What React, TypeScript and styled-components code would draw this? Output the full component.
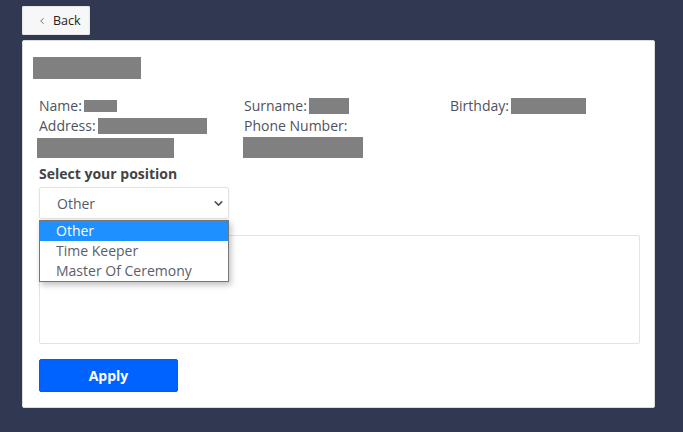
import React from "react";
import styled, { createGlobalStyle } from "styled-components";
import { ChevronDown, ChevronLeft } from "lucide-react";

const GlobalStyle = createGlobalStyle`
  html, body {
    margin: 0;
    padding: 0;
    background: #313852;
    font-family: "Open Sans", "Noto Sans", sans-serif;
  }
  * { box-sizing: border-box; }
`;

const Page = styled.div`
  padding: 6px 28px 24px 22px;
  display: flex;
  flex-direction: column;
  align-items: flex-start;
  gap: 5px;
`;

const BackButton = styled.button`
  width: 68px;
  height: 29px;
  display: flex;
  align-items: center;
  gap: 6px;
  padding: 0 0 0 14px;
  background: #f7f7f7;
  border: 1px solid #e6e6e6;
  border-radius: 1px;
  font-family: "Open Sans", sans-serif;
  font-size: 12.5px;
  color: #222;
  cursor: pointer;
`;

const Card = styled.div`
  width: 633px;
  height: 368px;
  background: #fff;
  border: 1px solid #dcdcdc;
  border-radius: 2px;
  padding: 16px 14px 15px 16px;
  display: flex;
  flex-direction: column;
  & > * {
    flex-shrink: 0;
  }
`;

const Redacted = styled.span<{ w: number; h: number }>`
  display: inline-block;
  width: ${(p) => p.w}px;
  height: ${(p) => p.h}px;
  background: #808080;
  vertical-align: middle;
`;

const TitleBlock = styled(Redacted)`
  margin-left: -6px;
  display: block;
`;

const InfoGrid = styled.div`
  display: grid;
  grid-template-columns: 205px 206px 1fr;
  margin-top: 18px;
`;

const InfoColumn = styled.div`
  display: flex;
  flex-direction: column;
`;

const InfoLine = styled.div`
  font-size: 14px;
  line-height: 18px;
  color: #4e5260;
  display: flex;
  align-items: center;
  gap: 2px;
  white-space: nowrap;
`;

const WrapBlock = styled.div<{ indent: number }>`
  margin-left: ${(p) => p.indent}px;
`;

const Label = styled.div`
  margin-top: 7px;
  font-size: 14px;
  line-height: 18px;
  font-weight: 700;
  color: #444;
`;

const SelectArea = styled.div`
  position: relative;
  margin-top: 4px;
  width: 190px;
`;

const SelectBox = styled.div`
  height: 32px;
  border: 1px solid #e3e3e3;
  border-radius: 2px;
  box-shadow: 0 1px 3px rgba(0, 0, 0, 0.06);
  display: flex;
  align-items: center;
  justify-content: space-between;
  padding: 0 3px 0 17px;
  font-size: 14px;
  color: #555a66;
`;

const Dropdown = styled.ul`
  position: absolute;
  top: 33px;
  left: 0;
  width: 190px;
  margin: 0;
  padding: 0;
  list-style: none;
  background: #fff;
  border: 1px solid #767676;
  box-shadow: 2px 3px 6px rgba(0, 0, 0, 0.25);
  z-index: 2;
`;

const Option = styled.li<{ active?: boolean }>`
  height: 20px;
  line-height: 20px;
  padding-left: 16px;
  font-size: 14px;
  color: ${(p) => (p.active ? "#fff" : "#5a5e6b")};
  background: ${(p) => (p.active ? "#1e90ff" : "transparent")};
`;

const TextArea = styled.div`
  margin-top: 16px;
  width: 601px;
  height: 109px;
  border: 1px solid #e3e3e3;
  border-radius: 2px;
`;

const ApplyButton = styled.button`
  margin-top: 15px;
  width: 139px;
  height: 33px;
  background: #0062ff;
  border: 1px solid #0a5ae6;
  border-radius: 2px;
  color: #fff;
  font-family: "Open Sans", sans-serif;
  font-weight: 700;
  font-size: 14px;
  cursor: pointer;
`;

const positions = ["Other", "Time Keeper", "Master Of Ceremony"];

export default function App() {
  return (
    <>
      <GlobalStyle />
      <Page>
        <BackButton>
          <ChevronLeft size={10} strokeWidth={2} color="#555" />
          Back
        </BackButton>
        <Card>
          <TitleBlock w={108} h={22} />
          <InfoGrid>
            <InfoColumn>
              <InfoLine>
                Name: <Redacted w={33} h={12} />
              </InfoLine>
              <InfoLine style={{ marginTop: 2 }}>
                Address: <Redacted w={109} h={16} />
              </InfoLine>
              <WrapBlock indent={-2}>
                <Redacted w={137} h={20} />
              </WrapBlock>
            </InfoColumn>
            <InfoColumn>
              <InfoLine>
                Surname: <Redacted w={40} h={16} />
              </InfoLine>
              <InfoLine style={{ marginTop: 2 }}>Phone Number:</InfoLine>
              <WrapBlock indent={-1}>
                <Redacted w={120} h={21} />
              </WrapBlock>
            </InfoColumn>
            <InfoColumn>
              <InfoLine>
                Birthday: <Redacted w={75} h={16} />
              </InfoLine>
            </InfoColumn>
          </InfoGrid>
          <Label>Select your position</Label>
          <SelectArea>
            <SelectBox>
              Other
              <ChevronDown size={13} strokeWidth={3} color="#555" />
            </SelectBox>
            <Dropdown>
              {positions.map((p, i) => (
                <Option key={p} active={i === 0}>
                  {p}
                </Option>
              ))}
            </Dropdown>
          </SelectArea>
          <TextArea />
          <ApplyButton>Apply</ApplyButton>
        </Card>
      </Page>
    </>
  );
}
